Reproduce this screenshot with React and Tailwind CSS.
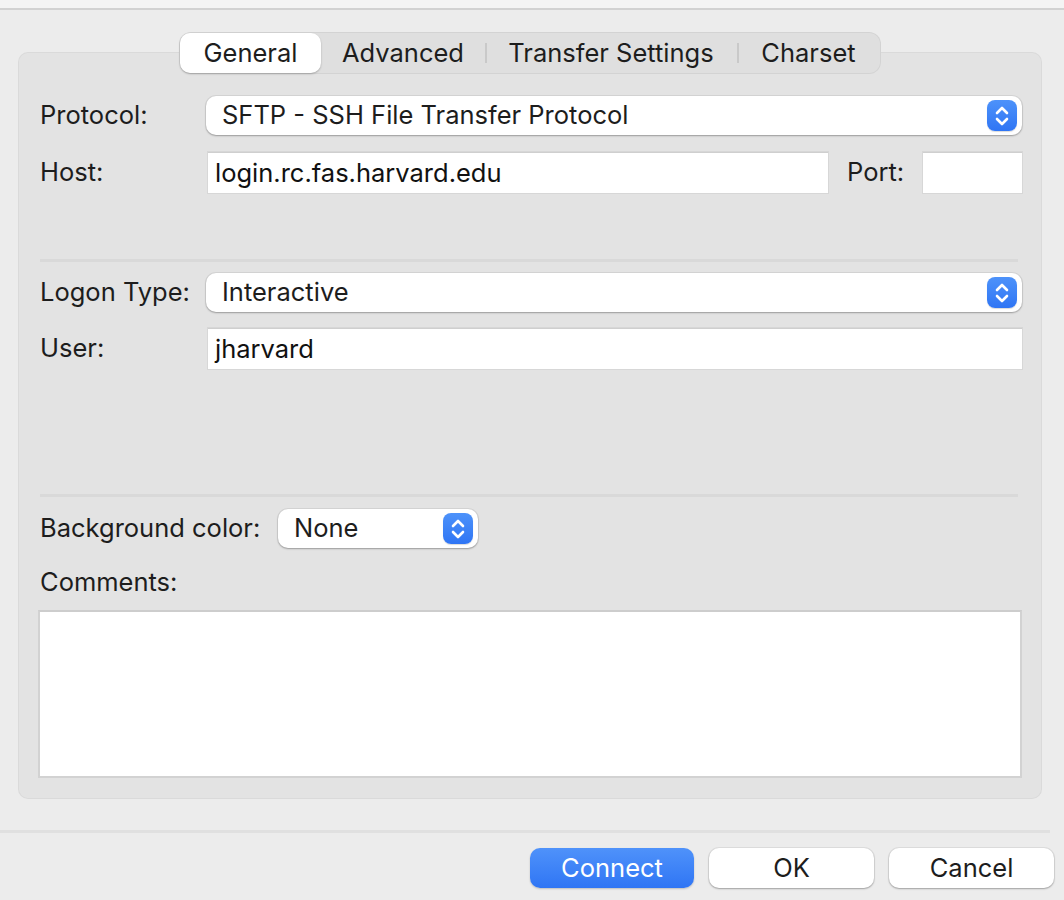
import React from 'react'

const FONT = { fontFamily: 'Inter, "Noto Sans", sans-serif' }

function Stepper() {
  return (
    <span className="flex items-center justify-center w-[30px] h-[31px] rounded-[8px] bg-gradient-to-b from-[#4d92fa] to-[#2f75f4] shadow-[0_1px_1px_rgba(0,0,0,0.15)]">
      <svg width="16" height="22" viewBox="0 0 16 22" fill="none" stroke="white" strokeWidth="2.6" strokeLinecap="round" strokeLinejoin="round">
        <path d="M3 8 L8 3 L13 8" />
        <path d="M3 14 L8 19 L13 14" />
      </svg>
    </span>
  )
}

function Select({ value, className = '' }) {
  return (
    <div className={`flex items-center justify-between h-[39px] bg-white rounded-[10px] pl-[16px] pr-[5px] shadow-[0_0_0_1px_rgba(0,0,0,0.06),0_1px_2px_rgba(0,0,0,0.28)] ${className}`}>
      <span className="text-[25.5px] text-[#1d1d1d]">{value}</span>
      <Stepper />
    </div>
  )
}

function Input({ value = '', className = '' }) {
  return (
    <div className={`flex items-center h-[41px] bg-white pl-[7px] border-t border-[#cfcfcf] shadow-[0_0_0_1px_rgba(0,0,0,0.05)] ${className}`}>
      <span className="text-[25.5px] text-[#111]">{value}</span>
    </div>
  )
}

function Label({ children, className = '' }) {
  return <span className={`text-[25.5px] text-[#1d1d1d] ${className}`}>{children}</span>
}

const TABS = [
  { label: 'General', w: 'w-[141px]', active: true },
  { label: 'Advanced', w: 'w-[164px]' },
  { label: 'Transfer Settings', w: 'w-[252px]' },
  { label: 'Charset', w: 'w-[143px]' },
]

export default function App() {
  return (
    <div className="w-[1064px] h-[900px] bg-[#ececec] overflow-hidden flex flex-col" style={FONT}>
      <div className="h-[10px] bg-[#f4f4f4] border-b-2 border-[#d2d2d2]" />

      {/* tabs */}
      <div className="relative z-10 mt-[22px] flex justify-center pr-[4px]">
        <div className="flex items-center h-[42px] rounded-[12px] bg-[#dfdfdf] shadow-[inset_0_0_0_1px_rgba(0,0,0,0.05)] p-[1px]">
          {TABS.map((t, i) => (
            <div key={t.label} className={`relative flex items-center justify-center h-[40px] ${t.w} ${t.active ? 'bg-white rounded-[10px] shadow-[0_1px_2px_rgba(0,0,0,0.25)]' : ''}`}>
              {i > 1 && <span className="absolute left-0 top-[10px] h-[20px] w-[2px] bg-[#c9c9c9]" />}
              <span className="text-[25.5px] text-[#1d1d1d]">{t.label}</span>
            </div>
          ))}
        </div>
      </div>

      {/* group box */}
      <div className="-mt-[22px] ml-[18px] w-[1024px] rounded-[10px] bg-[#e3e3e3] shadow-[inset_0_0_0_1px_rgba(0,0,0,0.04)] pt-[44px] pl-[22px] pr-[20px] pb-[21px] flex flex-col">
        <div className="flex items-center">
          <Label className="w-[166px]">Protocol:</Label>
          <Select value="SFTP - SSH File Transfer Protocol" className="flex-1" />
        </div>

        <div className="mt-[17px] flex items-center">
          <Label className="w-[168px]">Host:</Label>
          <Input value="login.rc.fas.harvard.edu" className="w-[620px]" />
          <Label className="ml-[19px] w-[76px]">Port:</Label>
          <Input className="flex-1" />
        </div>

        <div className="mt-[66px] h-[3px] mr-[4px] bg-[#d9d9d9]" />

        <div className="mt-[11px] flex items-center">
          <Label className="w-[166px]">Logon Type:</Label>
          <Select value="Interactive" className="flex-1" />
        </div>

        <div className="mt-[16px] flex items-center">
          <Label className="w-[168px]">User:</Label>
          <Input value="jharvard" className="flex-1 h-[40px]" />
        </div>

        <div className="mt-[125px] h-[3px] mr-[4px] bg-[#d9d9d9]" />

        <div className="mt-[12px] flex items-center">
          <Label className="w-[238px]">Background color:</Label>
          <Select value="None" className="w-[200px]" />
        </div>

        <div className="mt-[17px] h-[34px] flex items-center">
          <Label>Comments:</Label>
        </div>

        <div className="mt-[11px] -ml-[2px] h-[168px] bg-white border-2 border-[#d2d2d2] border-t-[#cdcdcd]" />
      </div>

      <div className="mt-[31px] w-[1050px] h-[3px] bg-[#e0e0e0]" />

      <div className="mt-[15px] flex justify-end gap-[15px] pr-[10px]">
        <button className="w-[164px] h-[40px] rounded-[10px] bg-gradient-to-b from-[#4f92fa] to-[#2f75f4] text-white text-[25.5px] shadow-[0_1px_2px_rgba(0,0,0,0.2)]">Connect</button>
        <button className="w-[165px] h-[40px] rounded-[10px] bg-white text-[#1d1d1d] text-[25.5px] shadow-[0_0_0_1px_rgba(0,0,0,0.06),0_1px_2px_rgba(0,0,0,0.28)]">OK</button>
        <button className="w-[165px] h-[40px] rounded-[10px] bg-white text-[#1d1d1d] text-[25.5px] shadow-[0_0_0_1px_rgba(0,0,0,0.06),0_1px_2px_rgba(0,0,0,0.28)]">Cancel</button>
      </div>
    </div>
  )
}
